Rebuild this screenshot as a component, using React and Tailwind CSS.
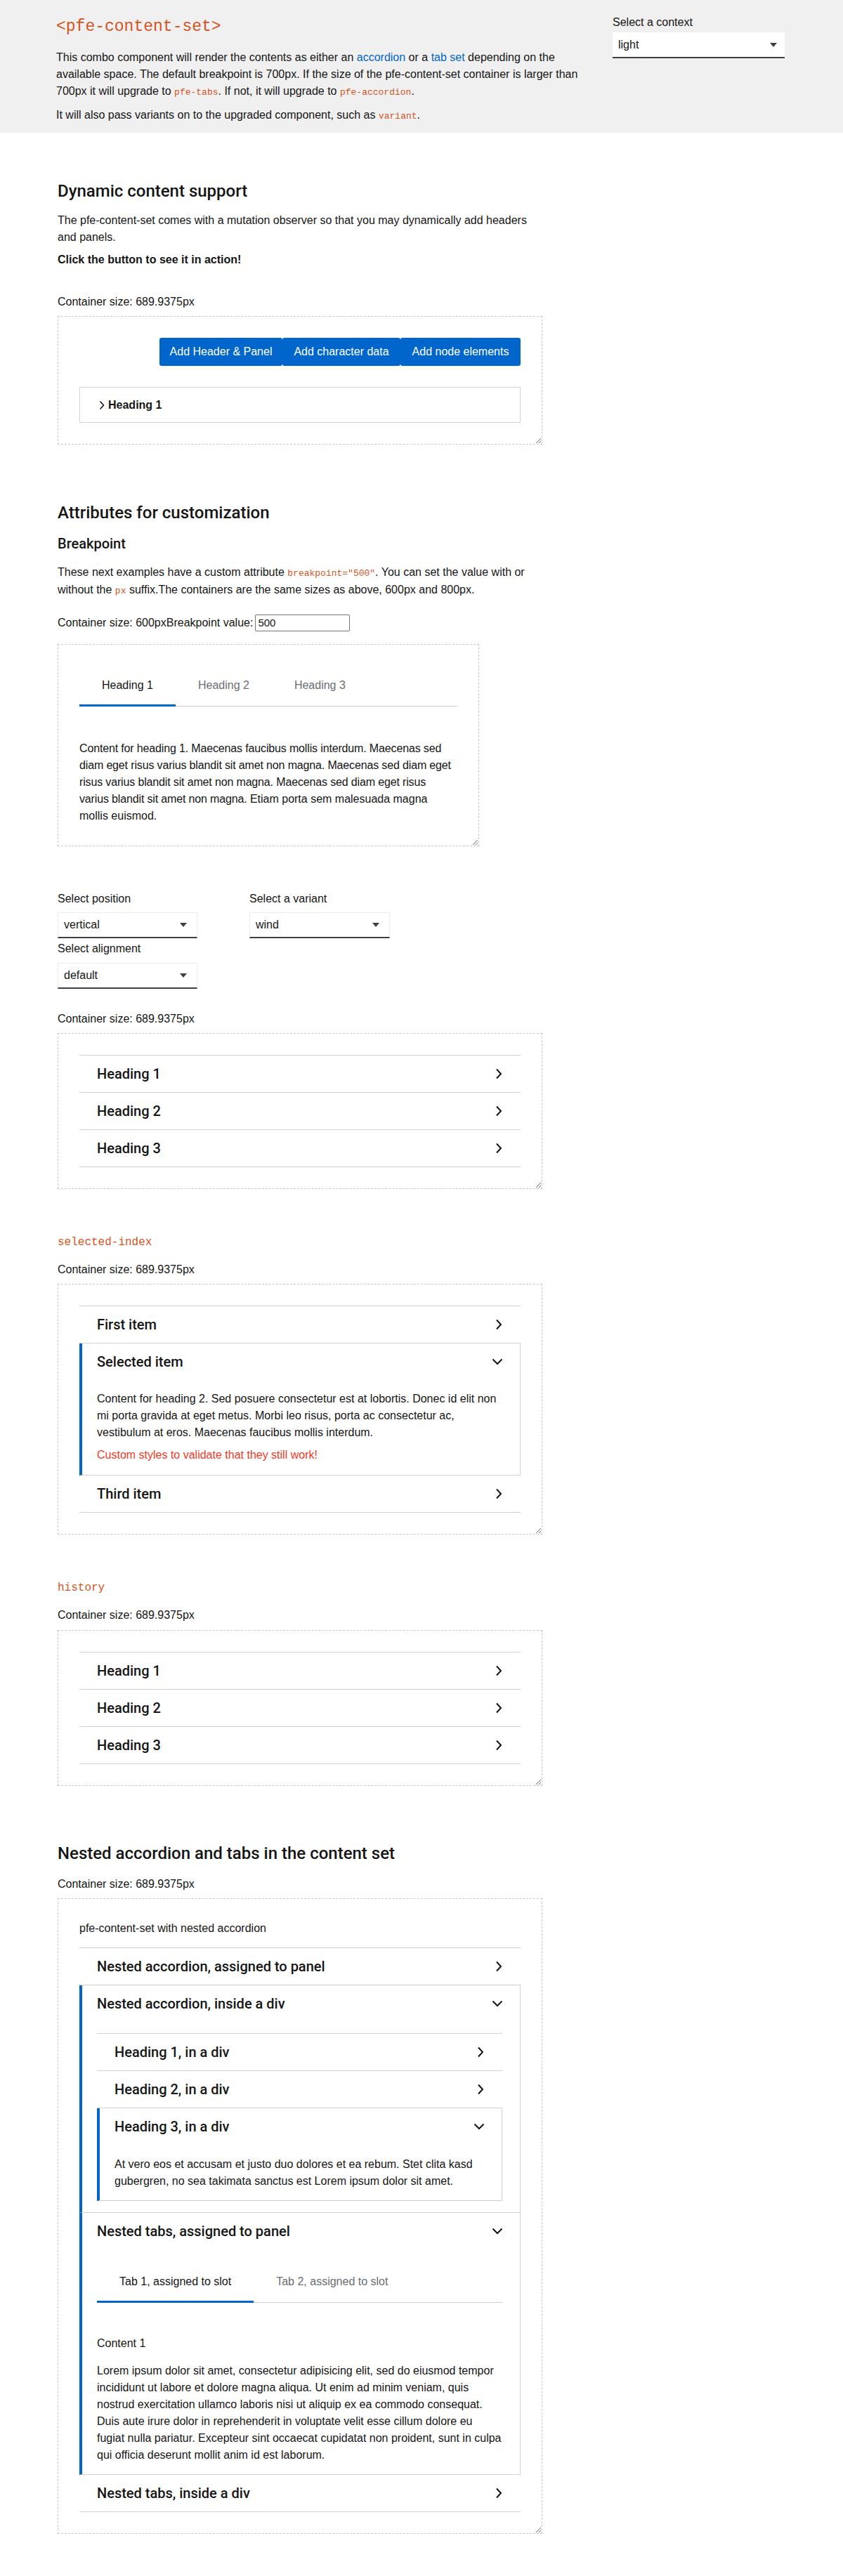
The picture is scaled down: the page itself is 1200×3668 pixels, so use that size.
import React from "react"

const mono = "font-['Liberation_Mono','Courier_New',monospace]"
const display = "font-['Roboto','Liberation_Sans',Arial,sans-serif] font-medium"

function Code({ children, className = "" }) {
  return <code className={`${mono} text-[13px] text-[#d4541e] ${className}`}>{children}</code>
}

function ChevronRight({ small }) {
  if (small) {
    return (
      <svg width="8" height="14" viewBox="0 0 8 14" fill="none" stroke="#151515" strokeWidth="1.6">
        <path d="M1.5 1.5l5 5.5-5 5.5" />
      </svg>
    )
  }
  return (
    <svg width="10" height="16" viewBox="0 0 10 16" fill="none" stroke="#151515" strokeWidth="2">
      <path d="M2 1.5l6 6.5-6 6.5" />
    </svg>
  )
}

function ChevronDown() {
  return (
    <svg width="16" height="10" viewBox="0 0 16 10" fill="none" stroke="#151515" strokeWidth="2">
      <path d="M1.5 1.5l6.5 6.5 6.5-6.5" />
    </svg>
  )
}

function Caret() {
  return (
    <svg width="10" height="6" viewBox="0 0 10 6">
      <path d="M0 0h10L5 6z" fill="#3c3f42" />
    </svg>
  )
}

function Select({ value, className = "" }) {
  return (
    <div className={`flex h-[37px] items-center justify-between bg-white border border-[#ededed] border-b-2 border-b-[#3c3f42] pl-[8px] pr-[14px] ${className}`}>
      <span>{value}</span>
      <Caret />
    </div>
  )
}

function Box({ children, className = "" }) {
  return (
    <div className={`resize overflow-auto border border-dashed border-[#c8c8c8] p-[30px] ${className}`}>
      {children}
    </div>
  )
}

function Accordion({ children, className = "" }) {
  return <div className={`border-t border-[#d2d2d2] ${className}`}>{children}</div>
}

function Item({ title, open, panel = "pt-[15px] pb-[16px]", children }) {
  if (!open) {
    return (
      <div className="flex h-[53px] items-center justify-between border-b border-[#d2d2d2] pl-[25px] pr-[26px]">
        <span className={`${display} text-[20px] leading-[28px]`}>{title}</span>
        <ChevronRight />
      </div>
    )
  }
  return (
    <div className="border-b border-r border-l-4 border-[#d2d2d2] border-l-[#06c]">
      <div className="flex h-[52px] items-center justify-between pl-[21px] pr-[24px]">
        <span className={`${display} text-[20px] leading-[28px]`}>{title}</span>
        <ChevronDown />
      </div>
      <div className={`pl-[21px] pr-[25px] ${panel}`}>{children}</div>
    </div>
  )
}

function Tabs({ tabs }) {
  return (
    <div className="flex border-b border-[#d2d2d2]">
      {tabs.map((t, i) => (
        <div
          key={t}
          className={`-mb-px border-b-[3px] px-[32px] pt-[16px] pb-[15px] ${i === 0 ? "border-[#06c] text-[#151515]" : "border-transparent text-[#6a6e73]"}`}
        >
          {t}
        </div>
      ))}
    </div>
  )
}

function SimpleAccordion() {
  return (
    <Accordion>
      <Item title="Heading 1" />
      <Item title="Heading 2" />
      <Item title="Heading 3" />
    </Accordion>
  )
}

export default function App() {
  return (
    <div className="font-['Liberation_Sans',Arial,sans-serif] text-[16px] leading-[24px] text-[#151515] pb-[66px]">
      <header className="flex h-[189px] bg-[#f0f0f0] pl-[80px] pt-[20px]">
        <div className="w-[755px] shrink-0 pt-[4px]">
          <h1 className={`${mono} text-[23px] leading-[28px] text-[#d4541e]`}>&lt;pfe-content-set&gt;</h1>
          <p className="mt-[18px]">
            This combo component will render the contents as either an <a className="text-[#06c]">accordion</a> or a{" "}
            <a className="text-[#06c]">tab set</a> depending on the available space. The default breakpoint is 700px. If the
            size of the pfe-content-set container is larger than 700px it will upgrade to <Code>pfe-tabs</Code>. If not, it
            will upgrade to <Code>pfe-accordion</Code>.
          </p>
          <p className="mt-[8px]">
            It will also pass variants on to the upgraded component, such as <Code>variant</Code>.
          </p>
        </div>
        <div className="ml-[37px] w-[245px] shrink-0">
          <label className="block">Select a context</label>
          <div className="mt-[2px] flex h-[37px] items-center justify-between bg-white border-b-2 border-[#3c3f42] pl-[8px] pr-[11px]">
            <span>light</span>
            <Caret />
          </div>
        </div>
      </header>

      <main className="ml-[82px] w-[690px]">
        {/* dynamic content */}
        <h2 className={`${display} mt-[67px] text-[24px] leading-[32px]`}>Dynamic content support</h2>
        <p className="mt-[14px]">
          The pfe-content-set comes with a mutation observer so that you may dynamically add headers and panels.
        </p>
        <p className="mt-[8px] font-bold">Click the button to see it in action!</p>
        <p className="mt-[36px]">Container size: 689.9375px</p>
        <Box className="mt-[8px]">
          <div className="flex justify-end">
            <button className="h-[40px] w-[175px] rounded-[3px] bg-[#06c] text-white">Add Header &amp; Panel</button>
            <button className="h-[40px] w-[168px] rounded-[3px] bg-[#06c] text-white">Add character data</button>
            <button className="h-[40px] w-[171px] rounded-[3px] bg-[#06c] text-white">Add node elements</button>
          </div>
          <div className="mt-[30px] flex h-[51px] items-center gap-[5px] border border-[#d2d2d2] pl-[27px] font-bold">
            <ChevronRight small />
            <span>Heading 1</span>
          </div>
        </Box>

        {/* attributes */}
        <h2 className={`${display} mt-[81px] text-[24px] leading-[32px]`}>Attributes for customization</h2>
        <h3 className={`${display} mt-[14px] text-[20px] leading-[28px]`}>Breakpoint</h3>
        <p className="mt-[15px] leading-[23px]">
          These next examples have a custom attribute <Code>breakpoint="500"</Code>. You can set the value with or without
          the <Code>px</Code> suffix.The containers are the same sizes as above, 600px and 800px.
        </p>
        <div className="mt-[22px] flex h-[24px] items-center">
          <span>Container size: 600pxBreakpoint value:</span>
          <input
            defaultValue="500"
            className="ml-[3px] h-[24px] w-[135px] rounded-[2px] border border-[#767676] px-[3px] text-[15px]"
          />
        </div>
        <Box className="mt-[18px] w-[600px]">
          <Tabs tabs={["Heading 1", "Heading 2", "Heading 3"]} />
          <p className="pt-[48px] tracking-[-0.15px]">
            Content for heading 1. Maecenas faucibus mollis interdum. Maecenas sed diam eget risus varius blandit sit amet non
            magna. Maecenas sed diam eget risus varius blandit sit amet non magna. Maecenas sed diam eget risus varius
            blandit sit amet non magna.{" "}
            <span className="tracking-normal">Etiam porta sem malesuada magna mollis euismod.</span>
          </p>
        </Box>

        {/* selects */}
        <div className="mt-[63px] flex">
          <div className="w-[273px]">
            <label className="block">Select position</label>
            <Select value="vertical" className="mt-[7px] w-[199px]" />
            <label className="mt-[3px] block">Select alignment</label>
            <Select value="default" className="mt-[8px] w-[199px]" />
          </div>
          <div>
            <label className="block">Select a variant</label>
            <Select value="wind" className="mt-[7px] w-[200px]" />
          </div>
        </div>
        <p className="mt-[31px]">Container size: 689.9375px</p>
        <Box className="mt-[8px]">
          <SimpleAccordion />
        </Box>

        {/* selected-index */}
        <p className={`${mono} mt-[64px] text-[16px] text-[#d4541e]`}>selected-index</p>
        <p className="mt-[15px]">Container size: 689.9375px</p>
        <Box className="mt-[8px]">
          <Accordion>
            <Item title="First item" />
            <Item open title="Selected item">
              <p>
                Content for heading 2. Sed posuere consectetur est at lobortis. Donec id elit non mi porta gravida at eget
                metus. Morbi leo risus, porta ac consectetur ac, vestibulum at eros. Maecenas faucibus mollis interdum.
              </p>
              <p className="mt-[8px] text-[#f0391f]">Custom styles to validate that they still work!</p>
            </Item>
            <Item title="Third item" />
          </Accordion>
        </Box>

        {/* history */}
        <p className={`${mono} mt-[64px] text-[16px] text-[#d4541e]`}>history</p>
        <p className="mt-[15px]">Container size: 689.9375px</p>
        <Box className="mt-[9px]">
          <SimpleAccordion />
        </Box>

        {/* nested */}
        <h2 className={`${display} mt-[80px] text-[24px] leading-[32px]`}>Nested accordion and tabs in the content set</h2>
        <p className="mt-[16px]">Container size: 689.9375px</p>
        <Box className="mt-[8px]">
          <p>pfe-content-set with nested accordion</p>
          <Accordion className="mt-[15px]">
            <Item title="Nested accordion, assigned to panel" />
            <Item open title="Nested accordion, inside a div" panel="pt-[16px] pb-[16px]">
              <Accordion>
                <Item title="Heading 1, in a div" />
                <Item title="Heading 2, in a div" />
                <Item open title="Heading 3, in a div" panel="pt-[16px] pb-[15px]">
                  <p>
                    At vero eos et accusam et justo duo dolores et ea rebum. Stet clita kasd gubergren, no sea takimata
                    sanctus est Lorem ipsum dolor sit amet.
                  </p>
                </Item>
              </Accordion>
            </Item>
            <Item open title="Nested tabs, assigned to panel" panel="pt-[18px] pb-[15px]">
              <Tabs tabs={["Tab 1, assigned to slot", "Tab 2, assigned to slot"]} />
              <div className="pt-[46px]">
                <h4 className="font-medium">Content 1</h4>
                <p className="mt-[15px]">
                  Lorem ipsum dolor sit amet, consectetur adipisicing elit, sed do eiusmod tempor incididunt ut labore et
                  dolore magna aliqua. Ut enim ad minim veniam, quis nostrud exercitation ullamco laboris nisi ut aliquip ex
                  ea commodo consequat. Duis aute irure dolor in reprehenderit in voluptate velit esse cillum dolore eu fugiat
                  nulla pariatur. Excepteur sint occaecat cupidatat non proident, sunt in culpa qui officia deserunt mollit
                  anim id est laborum.
                </p>
              </div>
            </Item>
            <Item title="Nested tabs, inside a div" />
          </Accordion>
        </Box>
      </main>
    </div>
  )
}
